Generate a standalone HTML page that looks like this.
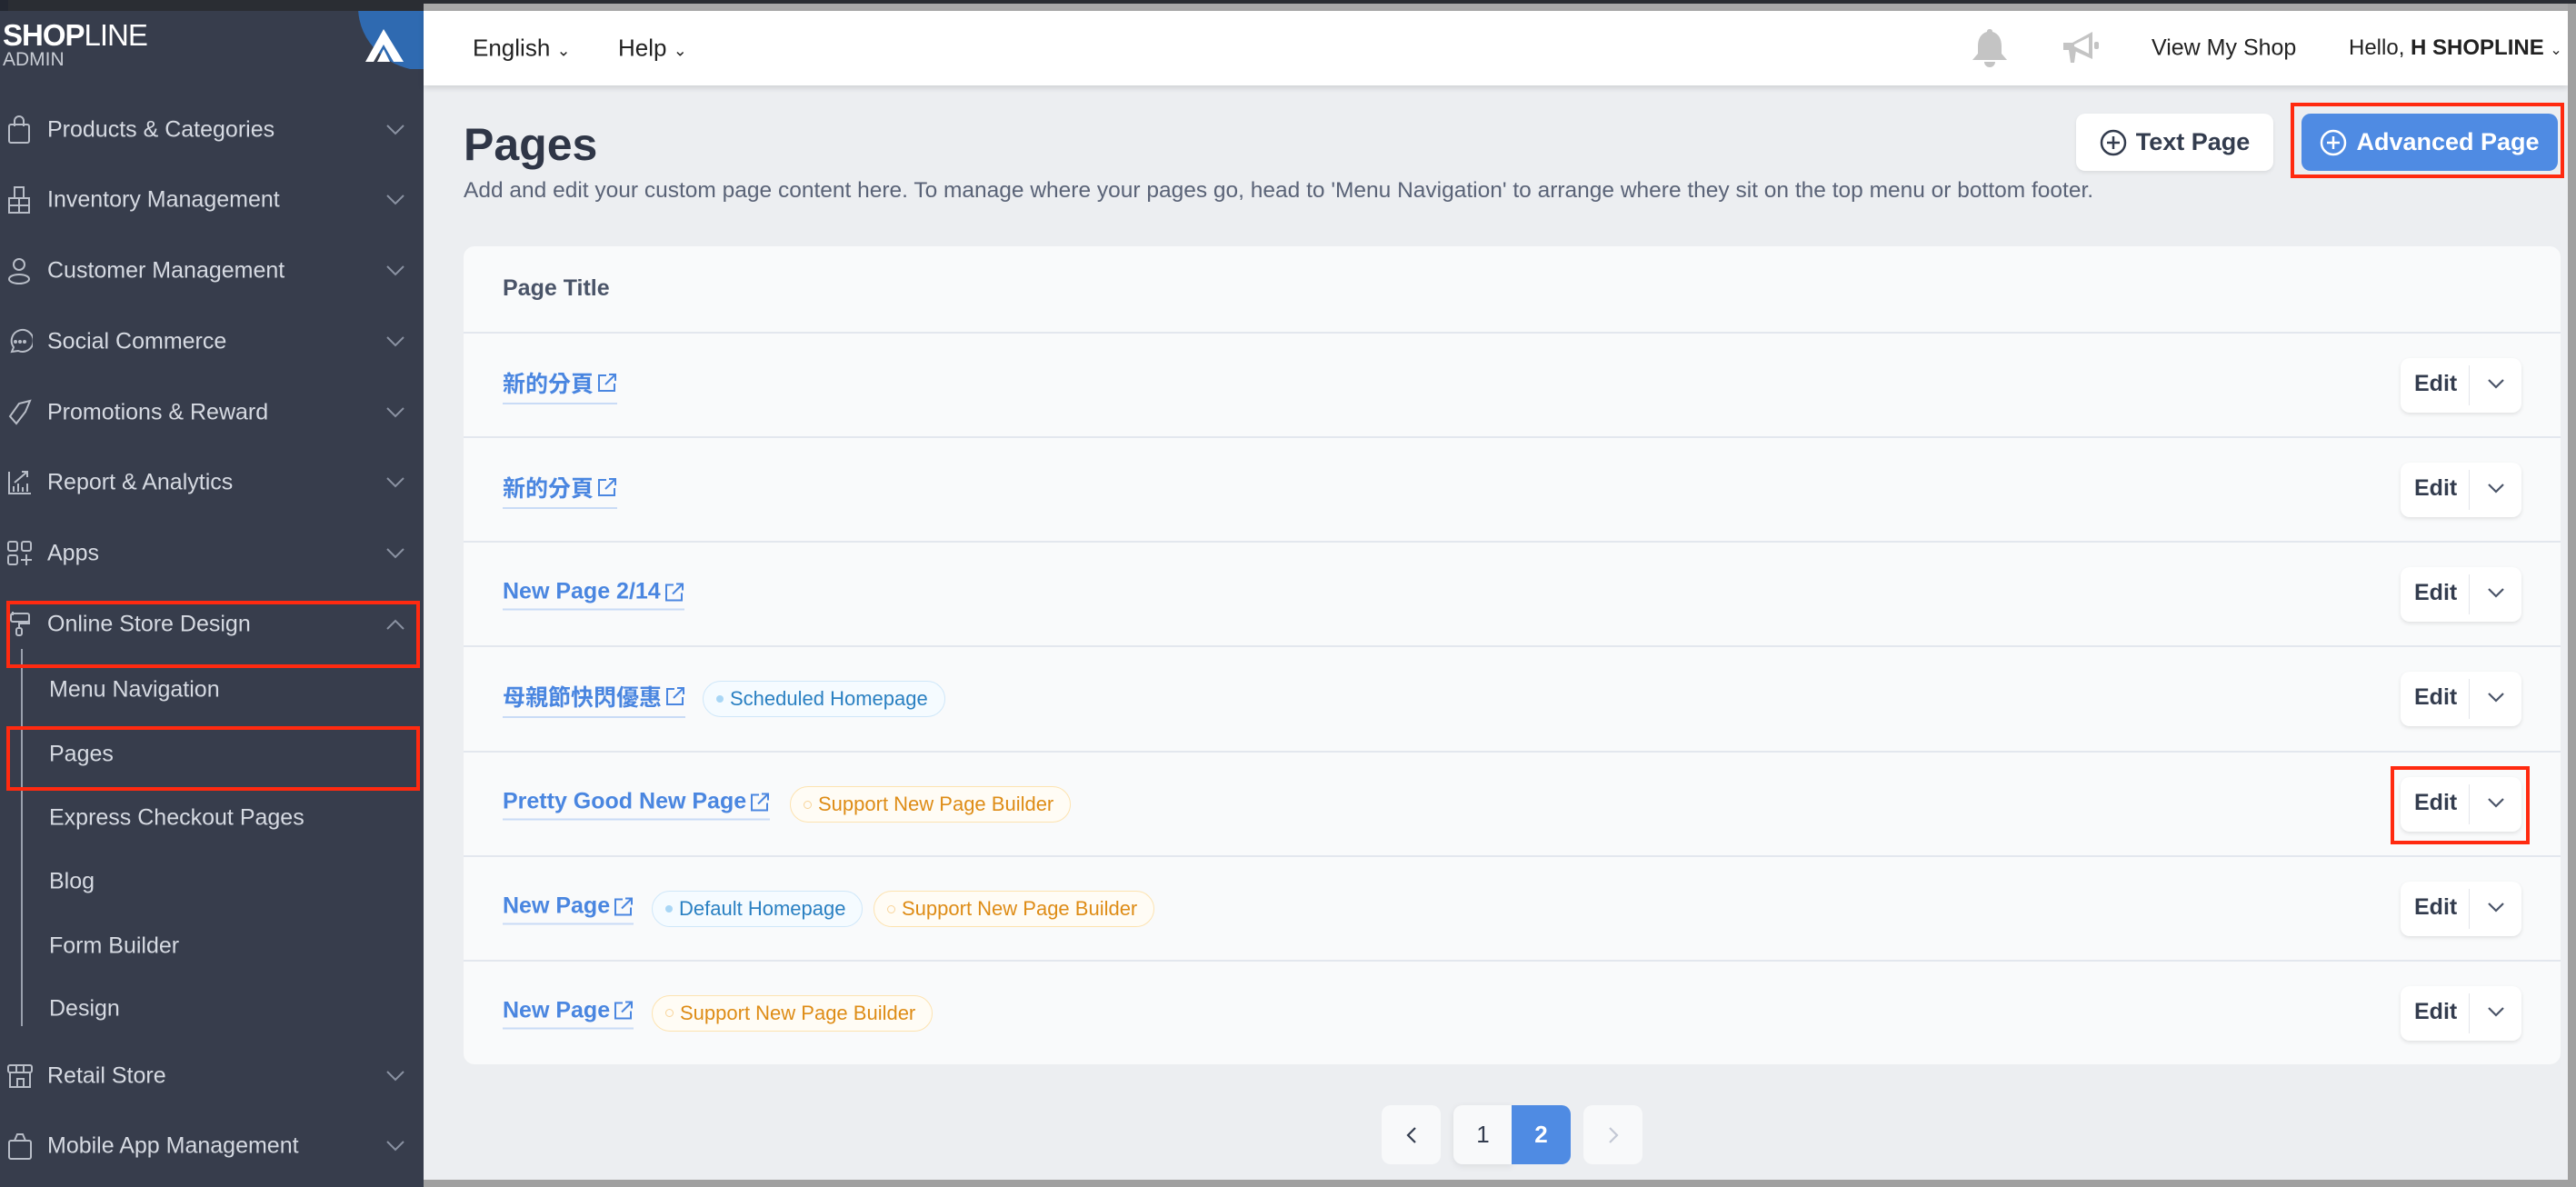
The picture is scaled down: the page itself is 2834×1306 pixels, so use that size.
<!DOCTYPE html>
<html><head><meta charset="utf-8">
<style>
*{box-sizing:border-box;margin:0;padding:0}
body{width:2834px;height:1306px;overflow:hidden;background:#2a2d33;font-family:"Liberation Sans","Noto Sans CJK TC",sans-serif;position:relative}
#gtop{position:absolute;left:466px;top:4px;width:2368px;height:8px;background:#a9a9a9}
#side{position:absolute;left:0;top:12px;width:466px;height:1294px;background:#373d4c}
#lstrip{position:absolute;left:0;top:0;width:9px;height:1306px;background:#232731}
.logo1{position:absolute;left:3px;top:20px;color:#fff;font-size:33px;font-weight:bold;letter-spacing:-1px}
.logo1 span{font-weight:normal}
.logo2{position:absolute;left:3px;top:54px;color:#c8ccd4;font-size:21px}
#circ{position:absolute;left:394px;top:12px;width:72px;height:64px;overflow:hidden}
#circ div{position:absolute;left:0;top:-74px;width:150px;height:140px;border-radius:50%;background:#2f6ab1}
.it{position:absolute;left:52px;color:#d6dae2;font-size:25px;transform:translateY(-50%)}
.ic{position:absolute;left:8px;transform:translateY(-50%)}
.ch{position:absolute;left:424px;transform:translateY(-50%)}
.sub{position:absolute;left:54px;color:#d6dae2;font-size:25px;transform:translateY(-50%)}
.red{position:absolute;border:4px solid #ff2a10}
#main{position:absolute;left:466px;top:12px;width:2359px;height:1286px;background:#eceef1}
#hdr{position:absolute;left:466px;top:12px;width:2359px;height:82px;background:#fff;box-shadow:0 3px 6px rgba(0,0,0,.12)}
.hn{position:absolute;top:50%;transform:translateY(-50%);font-size:26px;color:#222;white-space:nowrap}
#gright{position:absolute;left:2825px;top:4px;width:9px;height:1302px;background:#a0a0a0}
#gbot{position:absolute;left:466px;top:1298px;width:2368px;height:8px;background:#a0a0a0}
h1{position:absolute;left:510px;top:130px;font-size:50px;color:#2f3647;font-weight:bold}
.desc{position:absolute;left:510px;top:196px;font-size:24.5px;color:#5a6377;white-space:nowrap}
.btn{position:absolute;top:125px;height:63px;border-radius:10px;font-size:27px;font-weight:bold;display:flex;align-items:center;justify-content:center;gap:10px}
#card{position:absolute;left:510px;top:271px;width:2307px;height:900px;background:#f9fafb;border-radius:12px}
.row{position:absolute;left:0;width:2307px;border-top:2px solid #e3e7ee}
.lnk{position:absolute;left:43px;top:50%;transform:translateY(-50%);color:#4a86e0;font-size:25px;font-weight:bold;padding-bottom:4px;border-bottom:2px solid #c9dbf6;display:flex;align-items:center;gap:4px}
.bd{position:absolute;top:50%;transform:translateY(-50%);height:40px;border-radius:20px;font-size:22px;display:flex;align-items:center;padding:0 18px 0 14px;gap:7px;white-space:nowrap}
.bb{background:#f5fbff;border:1.5px solid #cfe7f9;color:#2a80c2}
.bb i{width:8px;height:8px;border-radius:50%;background:#a9d6f5;display:block}
.bo{background:#fffcf5;border:1.5px solid #fde3b0;color:#de8c16}
.bo i{width:9px;height:9px;border-radius:50%;border:1.5px solid #f8d49a;display:block}
.edit{position:absolute;left:2131px;top:50%;transform:translateY(-50%);width:133px;height:60px;background:#fff;border-radius:10px;box-shadow:0 2px 4px rgba(0,0,0,.1)}
.edit b{position:absolute;left:15px;top:14px;font-size:25px;color:#333c4e}
.edit s{position:absolute;left:75px;top:8px;width:1px;height:44px;background:#e3e5ea}
.edit svg{position:absolute;left:95px;top:22px}
.pg{position:absolute;top:1216px;height:65px;width:65px;display:flex;align-items:center;justify-content:center;font-size:26px;background:#f8f9fa;border-radius:10px;color:#333c4e}
</style></head><body>
<div id="lstrip"></div>
<div id="gtop"></div>
<div id="side"></div>
<div id="circ"><div></div></div>
<svg style="position:absolute;left:402px;top:32px" width="42" height="36" viewBox="0 0 42 36"><path d="M20 0 L42 36 L31 36 L20 17 L9 36 L0 36 Z" fill="#fff"/><path d="M20 22 L27 36 L13 36 Z" fill="#fff"/></svg>
<div class="logo1">SHOP<span>LINE</span></div>
<div class="logo2">ADMIN</div>

<svg class="ic" style="top:143px" width="28" height="32" viewBox="0 0 28 32" fill="none" stroke="#b8bdc7" stroke-width="2"><rect x="2" y="10" width="22" height="20" rx="2"/><path d="M8 12V6a5 5 0 0 1 10 0v6"/></svg>
<div class="it" style="top:143px">Products &amp; Categories</div>
<svg class="ic" style="top:220px" width="28" height="32" viewBox="0 0 28 32" fill="none" stroke="#b8bdc7" stroke-width="2"><rect x="8" y="2" width="10" height="12"/><rect x="2" y="14" width="22" height="16"/><path d="M13 14v16M2 22h22"/></svg>
<div class="it" style="top:220px">Inventory Management</div>
<svg class="ic" style="top:298px" width="28" height="32" viewBox="0 0 28 32" fill="none" stroke="#b8bdc7" stroke-width="2"><circle cx="13" cy="9" r="6"/><ellipse cx="13" cy="25" rx="11" ry="5"/></svg>
<div class="it" style="top:298px">Customer Management</div>
<svg class="ic" style="top:376px" width="28" height="32" viewBox="0 0 28 32" fill="none" stroke="#b8bdc7" stroke-width="2"><path d="M5 27l2-5a12 12 0 1 1 5 4z"/><circle cx="9" cy="16" r="1" fill="#b8bdc7"/><circle cx="14" cy="16" r="1" fill="#b8bdc7"/><circle cx="19" cy="16" r="1" fill="#b8bdc7"/></svg>
<div class="it" style="top:376px">Social Commerce</div>
<svg class="ic" style="top:454px" width="28" height="32" viewBox="0 0 28 32" fill="none" stroke="#b8bdc7" stroke-width="2"><path d="M25 3L13 6 3 20l7 8 10-13z"/></svg>
<div class="it" style="top:454px">Promotions &amp; Reward</div>
<svg class="ic" style="top:531px" width="28" height="32" viewBox="0 0 28 32" fill="none" stroke="#b8bdc7" stroke-width="2"><path d="M2 4v24h24M7 26v-6M12 26v-9M17 26v-5M22 26v-9M8 16l14-12M16 4h6v6"/></svg>
<div class="it" style="top:531px">Report &amp; Analytics</div>
<svg class="ic" style="top:609px" width="28" height="30" viewBox="0 0 28 30" fill="none" stroke="#b8bdc7" stroke-width="2"><rect x="1" y="2" width="10" height="10" rx="2"/><rect x="16" y="2" width="10" height="10" rx="2"/><rect x="1" y="17" width="10" height="10" rx="2"/><path d="M21 16v12M15 22h12"/></svg>
<div class="it" style="top:609px">Apps</div>
<svg class="ic" style="top:687px" width="28" height="32" viewBox="0 0 28 32" fill="none" stroke="#b8bdc7" stroke-width="2"><rect x="4" y="4" width="20" height="9" rx="2"/><path d="M4 8H2M24 9v6h-11v5"/><rect x="10" y="20" width="6" height="8" rx="2"/><path d="M6 2v4"/></svg>
<div class="it" style="top:687px">Online Store Design</div>
<svg class="ch" style="top:687px" width="22" height="12" viewBox="0 0 22 12" fill="none" stroke="#8a92a2" stroke-width="2"><path d="M2 11l9-9 9 9"/></svg>
<div style="position:absolute;left:23px;top:714px;width:2px;height:415px;background:#9aa1ae"></div>
<div class="sub" style="top:759px">Menu Navigation</div>
<div class="sub" style="top:830px">Pages</div>
<div class="sub" style="top:900px">Express Checkout Pages</div>
<div class="sub" style="top:970px">Blog</div>
<div class="sub" style="top:1041px">Form Builder</div>
<div class="sub" style="top:1110px">Design</div>
<svg class="ic" style="top:1184px" width="28" height="32" viewBox="0 0 28 32" fill="none" stroke="#b8bdc7" stroke-width="2"><rect x="1" y="4" width="26" height="8" rx="2"/><rect x="3" y="12" width="22" height="16"/><path d="M10 4v8M18 4v8M11 28v-9h7v9"/></svg>
<div class="it" style="top:1184px">Retail Store</div>
<svg class="ic" style="top:1261px" width="28" height="32" viewBox="0 0 28 32" fill="none" stroke="#b8bdc7" stroke-width="2"><rect x="2" y="10" width="24" height="20" rx="2"/><path d="M8 10l3-7h6l3 7"/></svg>
<div class="it" style="top:1261px">Mobile App Management</div>
<svg class="ch" style="top:143px" width="22" height="12" viewBox="0 0 22 12" fill="none" stroke="#8a92a2" stroke-width="2"><path d="M2 1l9 9 9-9"/></svg>
<svg class="ch" style="top:220px" width="22" height="12" viewBox="0 0 22 12" fill="none" stroke="#8a92a2" stroke-width="2"><path d="M2 1l9 9 9-9"/></svg>
<svg class="ch" style="top:298px" width="22" height="12" viewBox="0 0 22 12" fill="none" stroke="#8a92a2" stroke-width="2"><path d="M2 1l9 9 9-9"/></svg>
<svg class="ch" style="top:376px" width="22" height="12" viewBox="0 0 22 12" fill="none" stroke="#8a92a2" stroke-width="2"><path d="M2 1l9 9 9-9"/></svg>
<svg class="ch" style="top:454px" width="22" height="12" viewBox="0 0 22 12" fill="none" stroke="#8a92a2" stroke-width="2"><path d="M2 1l9 9 9-9"/></svg>
<svg class="ch" style="top:531px" width="22" height="12" viewBox="0 0 22 12" fill="none" stroke="#8a92a2" stroke-width="2"><path d="M2 1l9 9 9-9"/></svg>
<svg class="ch" style="top:609px" width="22" height="12" viewBox="0 0 22 12" fill="none" stroke="#8a92a2" stroke-width="2"><path d="M2 1l9 9 9-9"/></svg>
<svg class="ch" style="top:1184px" width="22" height="12" viewBox="0 0 22 12" fill="none" stroke="#8a92a2" stroke-width="2"><path d="M2 1l9 9 9-9"/></svg>
<svg class="ch" style="top:1261px" width="22" height="12" viewBox="0 0 22 12" fill="none" stroke="#8a92a2" stroke-width="2"><path d="M2 1l9 9 9-9"/></svg>
<div class="red" style="left:7px;top:661px;width:455px;height:74px"></div>
<div class="red" style="left:7px;top:799px;width:455px;height:71px"></div>

<div id="main"></div>
<div id="hdr">
 <div class="hn" style="left:54px">English <span style="font-size:18px">&#8964;</span></div>
 <div class="hn" style="left:214px">Help <span style="font-size:18px">&#8964;</span></div>
 <svg style="position:absolute;left:1702px;top:18px" width="42" height="44" viewBox="0 0 42 44"><path d="M21 2c2 0 3 1 3 3 7 2 10 8 10 16v8l6 7H2l6-7v-8c0-8 3-14 10-16 0-2 1-3 3-3z" fill="#c4c4c4"/><path d="M15 38a6 6 0 0 0 12 0z" fill="#c4c4c4"/></svg>
 <svg style="position:absolute;left:1802px;top:21px" width="46" height="38" viewBox="0 0 46 38"><path d="M2 14h10l22-12v30L12 22H2z" fill="#c4c4c4"/><path d="M14 16l16-8v18l-16-8z" fill="#fff"/><path d="M8 22h8l-2 14H10z" fill="#c4c4c4"/><rect x="36" y="13" width="5" height="8" rx="2" fill="#c4c4c4"/></svg>
 <div class="hn" style="left:1901px;font-size:25px">View My Shop</div>
 <div class="hn" style="left:2118px;font-size:24px">Hello, <b>H SHOPLINE</b> <span style="font-size:16px">&#8964;</span></div>
</div>
<div id="gright"></div>
<div id="gbot"></div>

<h1>Pages</h1>
<div class="desc">Add and edit your custom page content here. To manage where your pages go, head to 'Menu Navigation' to arrange where they sit on the top menu or bottom footer.</div>
<div class="btn" style="left:2284px;width:217px;background:#fff;color:#333c4e;box-shadow:0 2px 4px rgba(0,0,0,.08)"><svg width="30" height="30" viewBox="0 0 30 30" fill="none" stroke="#333c4e" stroke-width="2.5"><circle cx="15" cy="15" r="13"/><path d="M15 8v14M8 15h14"/></svg>Text Page</div>
<div class="btn" style="left:2532px;width:282px;background:#4f8be3;color:#fff"><svg width="30" height="30" viewBox="0 0 30 30" fill="none" stroke="#fff" stroke-width="2.5"><circle cx="15" cy="15" r="13"/><path d="M15 8v14M8 15h14"/></svg>Advanced Page</div>
<div class="red" style="left:2520px;top:113px;width:301px;height:83px"></div>

<div id="card">
 <div style="position:absolute;left:43px;top:32px;font-size:25px;font-weight:bold;color:#4a5468">Page Title</div>
 <div class="row" style="top:94px;height:116px"><div class="lnk">新的分頁<svg width="22" height="22" viewBox="0 0 22 22" fill="none" stroke="#4a86e0" stroke-width="2"><path d="M10 3H2v17h17v-8M13 2h7v7M20 2L9 13"/></svg></div><div class="edit"><b>Edit</b><s></s><svg width="20" height="12" viewBox="0 0 20 12" fill="none" stroke="#4a5468" stroke-width="2.2"><path d="M2 2l8 8 8-8"/></svg></div></div>
 <div class="row" style="top:209px;height:116px"><div class="lnk">新的分頁<svg width="22" height="22" viewBox="0 0 22 22" fill="none" stroke="#4a86e0" stroke-width="2"><path d="M10 3H2v17h17v-8M13 2h7v7M20 2L9 13"/></svg></div><div class="edit"><b>Edit</b><s></s><svg width="20" height="12" viewBox="0 0 20 12" fill="none" stroke="#4a5468" stroke-width="2.2"><path d="M2 2l8 8 8-8"/></svg></div></div>
 <div class="row" style="top:324px;height:116px"><div class="lnk">New Page 2/14<svg width="22" height="22" viewBox="0 0 22 22" fill="none" stroke="#4a86e0" stroke-width="2"><path d="M10 3H2v17h17v-8M13 2h7v7M20 2L9 13"/></svg></div><div class="edit"><b>Edit</b><s></s><svg width="20" height="12" viewBox="0 0 20 12" fill="none" stroke="#4a5468" stroke-width="2.2"><path d="M2 2l8 8 8-8"/></svg></div></div>
 <div class="row" style="top:439px;height:116px"><div class="lnk">母親節快閃優惠<svg width="22" height="22" viewBox="0 0 22 22" fill="none" stroke="#4a86e0" stroke-width="2"><path d="M10 3H2v17h17v-8M13 2h7v7M20 2L9 13"/></svg></div><div class="bd bb" style="left:263px"><i></i>Scheduled Homepage</div><div class="edit"><b>Edit</b><s></s><svg width="20" height="12" viewBox="0 0 20 12" fill="none" stroke="#4a5468" stroke-width="2.2"><path d="M2 2l8 8 8-8"/></svg></div></div>
 <div class="row" style="top:555px;height:116px"><div class="lnk">Pretty Good New Page<svg width="22" height="22" viewBox="0 0 22 22" fill="none" stroke="#4a86e0" stroke-width="2"><path d="M10 3H2v17h17v-8M13 2h7v7M20 2L9 13"/></svg></div><div class="bd bo" style="left:359px"><i></i>Support New Page Builder</div><div class="edit"><b>Edit</b><s></s><svg width="20" height="12" viewBox="0 0 20 12" fill="none" stroke="#4a5468" stroke-width="2.2"><path d="M2 2l8 8 8-8"/></svg></div></div>
 <div class="row" style="top:670px;height:116px"><div class="lnk">New Page<svg width="22" height="22" viewBox="0 0 22 22" fill="none" stroke="#4a86e0" stroke-width="2"><path d="M10 3H2v17h17v-8M13 2h7v7M20 2L9 13"/></svg></div><div class="bd bb" style="left:207px"><i></i>Default Homepage</div><div class="bd bo" style="left:451px"><i></i>Support New Page Builder</div><div class="edit"><b>Edit</b><s></s><svg width="20" height="12" viewBox="0 0 20 12" fill="none" stroke="#4a5468" stroke-width="2.2"><path d="M2 2l8 8 8-8"/></svg></div></div>
 <div class="row" style="top:785px;height:115px"><div class="lnk">New Page<svg width="22" height="22" viewBox="0 0 22 22" fill="none" stroke="#4a86e0" stroke-width="2"><path d="M10 3H2v17h17v-8M13 2h7v7M20 2L9 13"/></svg></div><div class="bd bo" style="left:207px"><i></i>Support New Page Builder</div><div class="edit"><b>Edit</b><s></s><svg width="20" height="12" viewBox="0 0 20 12" fill="none" stroke="#4a5468" stroke-width="2.2"><path d="M2 2l8 8 8-8"/></svg></div></div>
</div>
<div class="red" style="left:2630px;top:843px;width:153px;height:86px"></div>

<div class="pg" style="left:1520px"><svg width="12" height="20" viewBox="0 0 12 20" fill="none" stroke="#333c4e" stroke-width="2.2"><path d="M10 2L2 10l8 8"/></svg></div>
<div class="pg" style="left:1599px;border-radius:10px 0 0 10px;box-shadow:0 2px 8px rgba(0,0,0,.08)">1</div>
<div class="pg" style="left:1663px;background:#4f8be3;color:#fff;font-weight:bold;border-radius:0 10px 10px 0">2</div>
<div class="pg" style="left:1742px"><svg width="12" height="20" viewBox="0 0 12 20" fill="none" stroke="#c3c8d4" stroke-width="2.2"><path d="M2 2l8 8-8 8"/></svg></div>
</body></html>
